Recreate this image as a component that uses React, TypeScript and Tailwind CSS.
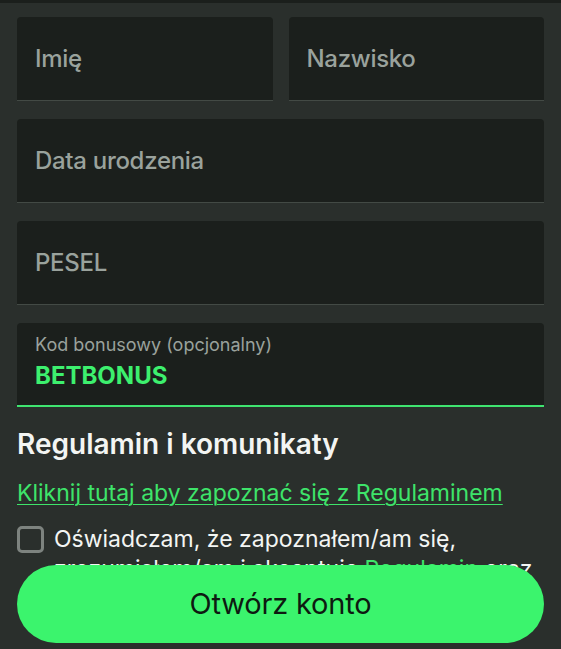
import React from "react";

function Field({ label }: { label: string }) {
  return (
    <div className="h-[84px] flex items-center pl-[18px] bg-[#1b1f1c] rounded-t-[4px] border-b border-[#434a45]">
      <span className="text-[24px] leading-[28px] font-medium tracking-[-0.3px] text-[#9aa29c]">{label}</span>
    </div>
  );
}

export default function App() {
  return (
    <div
      className="relative h-[649px] w-[561px] overflow-hidden bg-[#2a2f2c]"
      style={{ fontFamily: "Inter, 'Noto Sans', sans-serif" }}
    >
      <div className="h-[3px] bg-[#1b1f1c]" />
      <div className="px-[17px] pt-[14px]">
        <div className="flex flex-col gap-[18px]">
          <div className="grid grid-cols-2 gap-4">
            <Field label="Imię" />
            <Field label="Nazwisko" />
          </div>
          <Field label="Data urodzenia" />
          <Field label="PESEL" />
          <div className="h-[84px] pl-[18px] pt-[11px] bg-[#1b1f1c] rounded-t-[4px] border-b-2 border-[#3fe470]">
            <div className="text-[18px] leading-[22px] text-[#9aa29c]">Kod bonusowy (opcjonalny)</div>
            <div className="mt-[6px] text-[24px] leading-[28px] font-bold text-[#3df06e]">BETBONUS</div>
          </div>
        </div>

        <h2 className="mt-[21px] text-[28px] leading-[32px] font-semibold text-[#f3f5f3]">
          Regulamin i komunikaty
        </h2>
        <a
          href="#"
          className="mt-[19px] block text-[23px] leading-[28px] text-[#3ee46a] underline underline-offset-[3px] decoration-1"
        >
          Kliknij tutaj aby zapoznać się z Regulaminem
        </a>
        <div className="mt-[17px] flex items-start gap-[10px]">
          <div className="mt-[2px] h-[27px] w-[27px] shrink-0 rounded-[5px] border-[3px] border-[#7d837f]" />
          <p className="text-[23px] leading-[30px] text-[#f3f5f3]">
            Oświadczam, że zapoznałem/am się, zrozumiałem/am i akceptuję{" "}
            <span className="text-[#3ee46a]">Regulamin</span> oraz wyrażam zgodę na przetwarzanie{" "}
            <span className="text-[#3ee46a]">(polityka prywatności)</span>
          </p>
        </div>
      </div>

      <button className="absolute bottom-[6px] left-[17px] right-[17px] h-[78px] rounded-full bg-[#3bf46d] flex items-center justify-center">
        <span className="text-[29px] leading-[34px] tracking-[-0.2px] text-[#0e1a11]">Otwórz konto</span>
      </button>
    </div>
  );
}
